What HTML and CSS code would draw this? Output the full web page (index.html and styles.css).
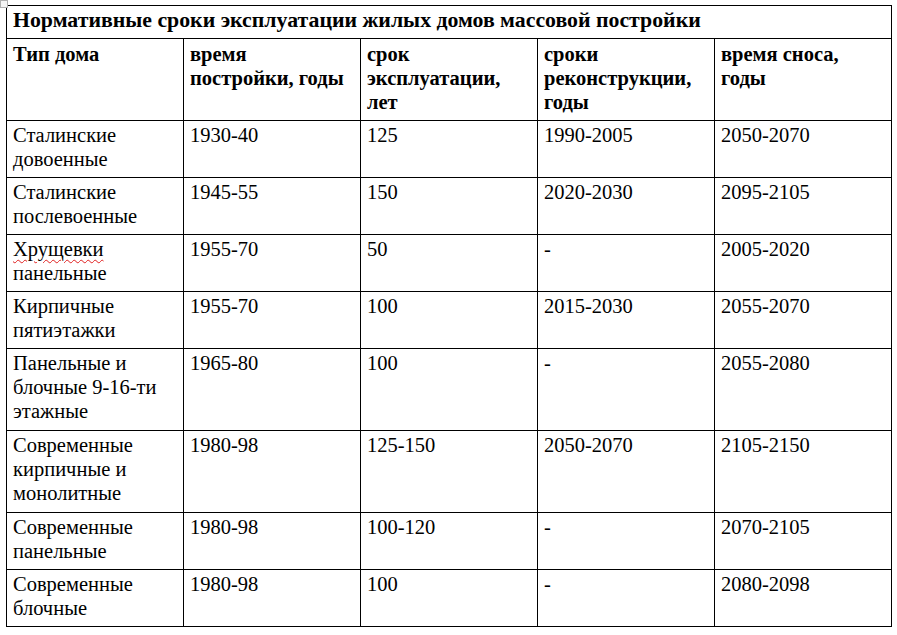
FILE: index.html
```html
<!DOCTYPE html>
<html lang="ru">
<head>
<meta charset="utf-8">
<title>Нормативные сроки эксплуатации</title>
<link rel="stylesheet" href="styles.css">
</head>
<body>
<div class="page">
  <span class="move-handle"></span>
  <table class="norms">
    <colgroup>
      <col class="c"><col class="c"><col class="c"><col class="c"><col class="c">
    </colgroup>
    <tr class="title"><th colspan="5">Нормативные сроки эксплуатации жилых домов массовой постройки</th></tr>
    <tr class="head">
      <th>Тип дома</th>
      <th>время постройки, годы</th>
      <th>срок эксплуатации, лет</th>
      <th>сроки реконструкции, годы</th>
      <th>время сноса, годы</th>
    </tr>
    <tr><td>Сталинские довоенные</td><td>1930-40</td><td>125</td><td>1990-2005</td><td>2050-2070</td></tr>
    <tr><td>Сталинские послевоенные</td><td>1945-55</td><td>150</td><td>2020-2030</td><td>2095-2105</td></tr>
    <tr><td><span class="spell">Хрущевки</span> панельные</td><td>1955-70</td><td>50</td><td>-</td><td>2005-2020</td></tr>
    <tr><td>Кирпичные пятиэтажки</td><td>1955-70</td><td>100</td><td>2015-2030</td><td>2055-2070</td></tr>
    <tr class="tall"><td>Панельные и блочные 9-16-ти этажные</td><td>1965-80</td><td>100</td><td>-</td><td>2055-2080</td></tr>
    <tr class="tall"><td>Современные кирпичные и монолитные</td><td>1980-98</td><td>125-150</td><td>2050-2070</td><td>2105-2150</td></tr>
    <tr><td>Современные панельные</td><td>1980-98</td><td>100-120</td><td>-</td><td>2070-2105</td></tr>
    <tr><td>Современные блочные</td><td>1980-98</td><td>100</td><td>-</td><td>2080-2098</td></tr>
  </table>
  <span class="size-handle"></span>
</div>
</body>
</html>
```
FILE: styles.css
```css
html, body {
  margin: 0;
  padding: 0;
  background: #fff;
}
body {
  font-family: "Liberation Serif", "Times New Roman", serif;
  color: #000;
}
.page {
  position: relative;
  padding: 5px 0 0 6px;
}
.norms {
  border-collapse: collapse;
  table-layout: fixed;
  width: 885px;
  font-family: "Liberation Serif", "Times New Roman", serif;
  font-size: 20.5px;
  line-height: 24px;
}
.norms .c {
  width: 177px;
}
.norms th,
.norms td {
  border: 1px solid #000;
  padding: 2px 6px 6px 6px;
  text-align: left;
  vertical-align: top;
  font-family: inherit;
}
.norms th {
  font-weight: bold;
}
.title th {
  padding: 2px 6px 6px 6px;
  font-size: 21.8px;
}
.head th {
  padding: 3px 6px 6px 6px;
}
.tall td {
  padding-bottom: 7px;
}
.spell {
  text-decoration: underline wavy #e02020;
  text-decoration-thickness: 1px;
  text-underline-offset: 3px;
}
.move-handle {
  position: absolute;
  left: 0;
  top: 0;
  width: 6px;
  height: 6px;
  border: 1px solid #b0b0b0;
  background: #f4f4f4;
}
.size-handle {
  position: absolute;
  left: 890px;
  top: 628px;
  width: 5px;
  height: 5px;
  border: 1px solid #c8c8c8;
  background: #fff;
}
```
